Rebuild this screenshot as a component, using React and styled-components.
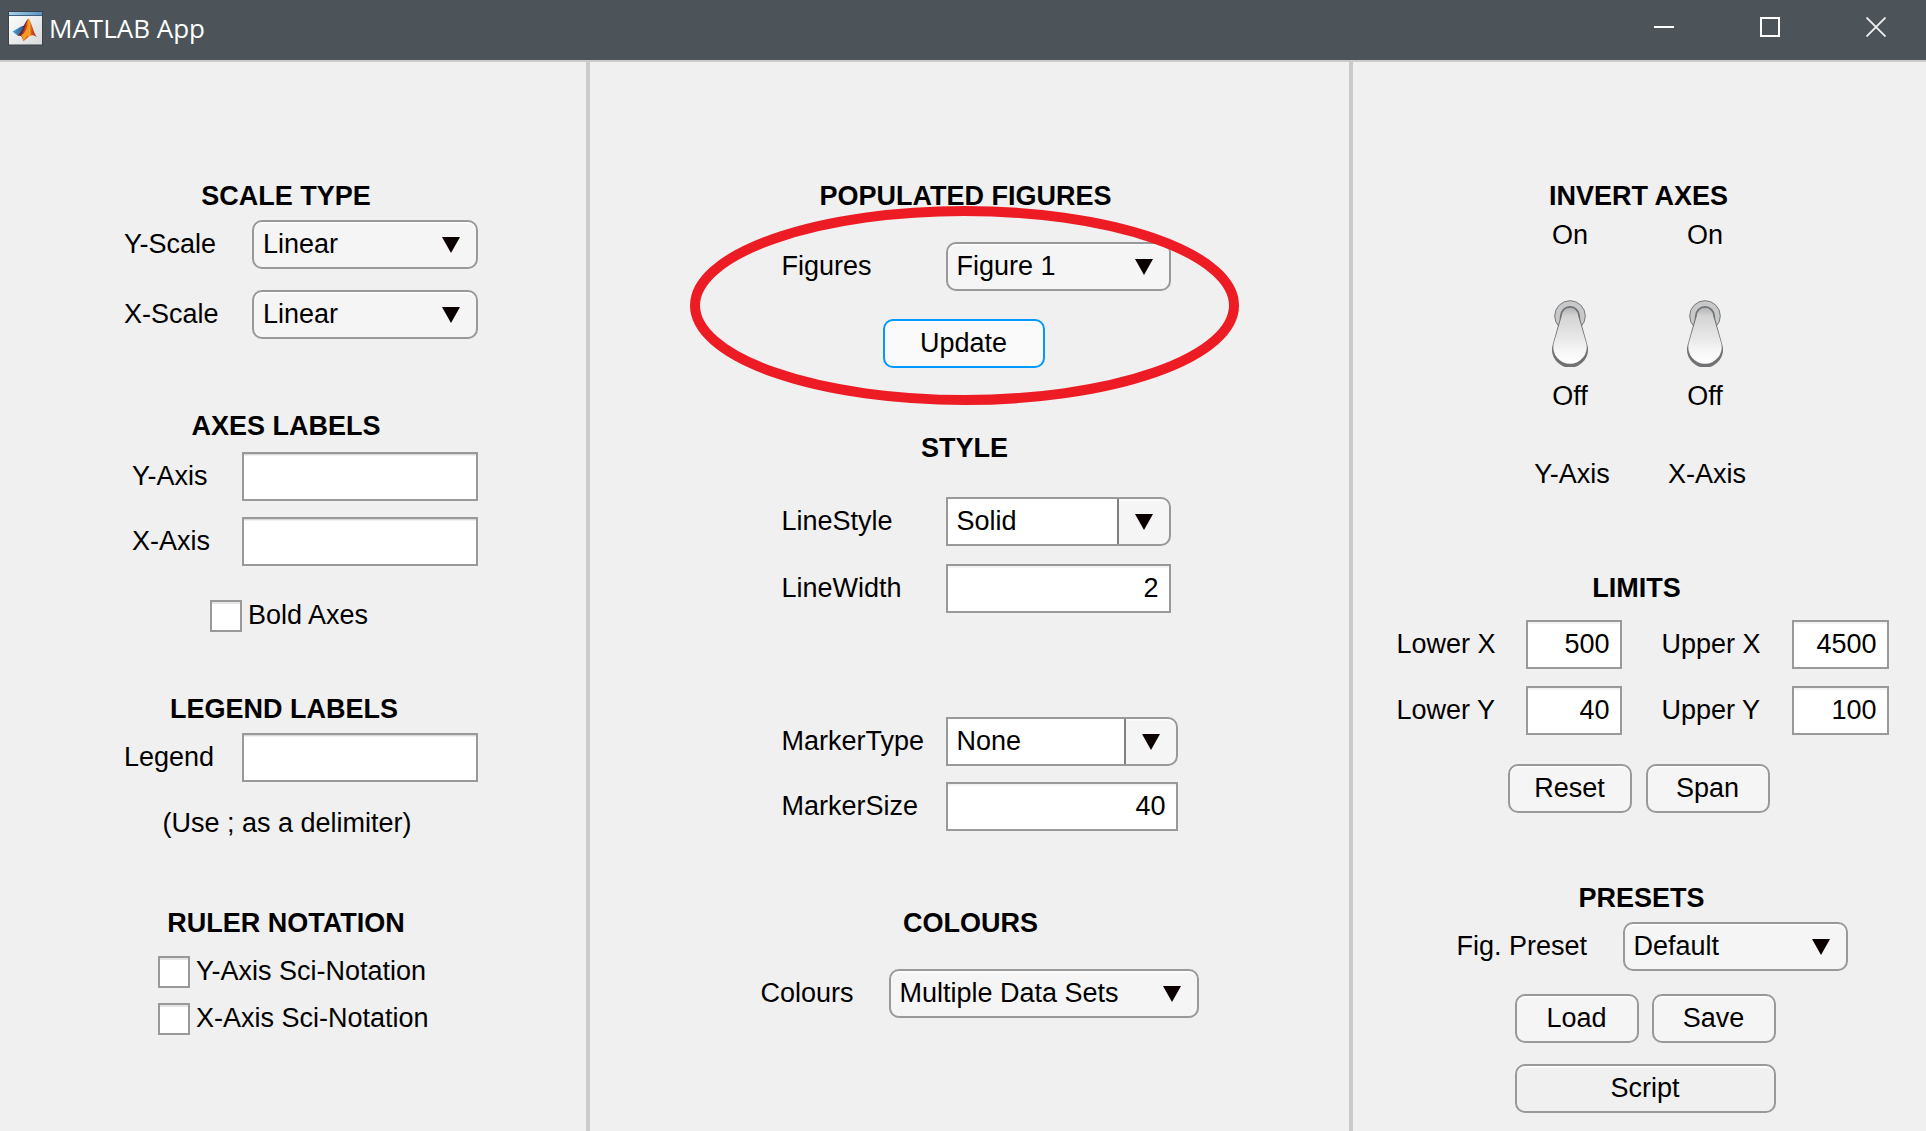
import React, { useState } from "react";
import styled, { createGlobalStyle } from "styled-components";

const GlobalStyle = createGlobalStyle`
  *, *::before, *::after { box-sizing: border-box; }
  body {
    margin: 0;
    background: #f0f0f0;
    color: #000;
    font: 27px/32px "Liberation Sans", Arial, Helvetica, sans-serif;
  }
  button, input, select { font: inherit; color: inherit; margin: 0; }
`;

const Window = styled.div`
  display: flex;
  flex-direction: column;
  min-height: 100vh;
`;

const TitleBar = styled.header`
  display: flex;
  align-items: center;
  height: 62px;
  padding: 0 0 4px 8px;
  background: #4c5459;
  border-bottom: 2px solid #cbcbcb;
`;

const AppTitle = styled.h1`
  flex: 1;
  margin: 0;
  padding-left: 6px;
  color: #fff;
  font: 400 26px/36px "Open Sans", "Noto Sans", sans-serif;
`;

const WindowControls = styled.div`
  display: flex;
  gap: 6px;
  align-self: flex-start;
`;

const WindowButton = styled.button`
  display: flex;
  align-items: center;
  justify-content: center;
  width: 100px;
  height: 54px;
  padding: 0;
  border: 0;
  background: transparent;
`;

const Panels = styled.main`
  flex: 1;
  display: grid;
  grid-template-columns: 590fr 763fr 573fr;
`;

const Panel = styled.section`
  display: flex;
  flex-direction: column;
  align-items: center;
  padding: 119px 0 16px ${(p) => p.$lead}px;
  border-right: ${(p) => (p.$last ? "0" : "4px solid #cbcbcb")};
`;

const Group = styled.div`
  position: relative;
  display: flex;
  flex-direction: column;
  width: ${(p) => p.$width}px;
  margin-top: ${(p) => p.$space || 0}px;
`;

const Heading = styled.h2`
  margin: 0;
  padding: 0 ${(p) => p.$inset}px 2px 0;
  font-size: 27px;
  line-height: 30px;
  font-weight: 700;
  text-align: center;
  white-space: nowrap;
`;

const Row = styled.div`
  display: flex;
  align-items: flex-start;
  align-self: ${(p) => (p.$wide ? "center" : "auto")};
  margin-top: ${(p) => p.$space}px;
  padding-left: ${(p) => p.$indent || 0}px;
`;

const Centered = styled.div`
  display: flex;
  justify-content: center;
  gap: 14px;
  margin-top: ${(p) => p.$space}px;
  padding-right: ${(p) => p.$inset || 0}px;
`;

const FieldLabel = styled.label`
  flex: none;
  width: ${(p) => p.$width}px;
  line-height: 48px;
  white-space: nowrap;
`;

const TextBox = styled.input`
  width: ${(p) => p.$width}px;
  height: 49px;
  padding: 0 10px 1px;
  border: 2px solid #999;
  border-radius: 0;
  background: #fff;
  box-shadow: inset 0 1px #d9d9d9, inset 0 2px #f0f0f0;
  outline: 0;
`;

const NumberBox = styled(TextBox)`
  text-align: right;
  box-shadow: inset 0 2px #f3f3f3;
`;

const SelectFrame = styled.div`
  display: grid;
  grid-template-columns: 1fr 50px;
  align-items: center;
  width: ${(p) => p.$width}px;
  height: 49px;
  border: 2px solid #999;
  border-radius: ${(p) => (p.$combo ? "0 10px 10px 0" : "10px")};
  background: #f5f5f5;
  box-shadow: inset 0 1px #fff, inset 0 2px #fafafa;
  overflow: hidden;
`;

const NativeSelect = styled.select`
  grid-row: 1;
  grid-column: ${(p) => (p.$combo ? "1" : "1 / 3")};
  width: 100%;
  height: 45px;
  padding: 0 0 1px 9px;
  appearance: none;
  border: 0;
  border-right: ${(p) => (p.$combo ? "2px solid #808080" : "0")};
  border-radius: 0;
  background: ${(p) => (p.$combo ? "#fff" : "transparent")};
  outline: 0;
`;

const Arrow = styled.svg`
  grid-row: 1;
  grid-column: 2;
  justify-self: center;
  display: block;
  pointer-events: none;
`;

const PushButton = styled.button`
  width: ${(p) => p.$width}px;
  height: 49px;
  padding: 0 0 1px;
  border: 2px solid ${(p) => (p.$focused ? "#0099ff" : "#999")};
  border-radius: 10px;
  background: ${(p) => (p.$focused ? "#fafafa" : p.$flat ? "#f0f0f0" : "#f5f5f5")};
  box-shadow: inset 0 1px #fff, inset 0 2px #fafafa;
`;

const PresetActions = styled.div`
  display: grid;
  grid-template-columns: 124px 124px;
  column-gap: 13px;
  row-gap: 21px;
  margin-top: 23px;
  padding-left: 118px;
`;

const ScriptButton = styled(PushButton)`
  grid-column: 1 / 3;
  width: 100%;
`;

const CheckLabel = styled.label`
  display: flex;
  align-items: flex-start;
  gap: 6px;
  margin-top: ${(p) => p.$space}px;
  padding-left: ${(p) => p.$indent}px;
  line-height: 30px;
`;

const CheckBox = styled.input`
  appearance: none;
  width: 32px;
  height: 32px;
  border: 2px solid #999;
  background: #fff;
  box-shadow: inset 0 2px #e6e6e6;
  &:checked { background: #666; }
`;

const Note = styled.p`
  margin: 0;
  margin-top: 25px;
  padding-right: 28px;
  text-align: center;
`;

const Switches = styled.div`
  display: flex;
  justify-content: center;
  gap: 35px;
  margin-top: 6px;
  padding-right: 10px;
`;

const SwitchColumn = styled.label`
  display: flex;
  flex-direction: column;
  align-items: center;
  width: 100px;
`;

const SwitchBody = styled.span`
  position: relative;
  display: block;
  width: 36px;
  height: 67px;
  margin: 49px 0 13px;
`;

const SwitchInput = styled.input`
  position: absolute;
  inset: 0;
  width: 100%;
  height: 100%;
  opacity: 0;
`;

const Lever = styled.svg`
  display: block;
  transform: ${(p) => (p.$on ? "scaleY(-1)" : "none")};
`;

const AxisName = styled.span`
  margin-top: 46px;
  padding-left: 4px;
`;

const LimitGrid = styled.div`
  display: grid;
  grid-template-columns: 129px 96px 1fr 130px 97px;
  row-gap: 17px;
  margin-top: 15px;
`;

const UpperLabel = styled(FieldLabel)`
  grid-column: 4;
`;

const Highlight = styled.svg`
  position: absolute;
  left: -92px;
  top: 25px;
  pointer-events: none;
`;

function MatlabIcon() {
  return (
    <svg width="35" height="35" viewBox="0 0 35 35" aria-hidden="true">
      <defs>
        <linearGradient id="iconPage" x1="0" y1="0" x2="1" y2="1">
          <stop offset="0" stopColor="#fff" />
          <stop offset="1" stopColor="#d6d9da" />
        </linearGradient>
        <linearGradient id="iconBar" x1="0" y1="0" x2="1" y2="0">
          <stop offset="0" stopColor="#a9d0ea" />
          <stop offset="1" stopColor="#5d94c2" />
        </linearGradient>
        <linearGradient id="iconBlue" x1="0" y1="0" x2="1" y2="0">
          <stop offset="0" stopColor="#4da3d8" />
          <stop offset="1" stopColor="#2b5288" />
        </linearGradient>
        <linearGradient id="iconPeak" x1="0" y1="0" x2="1" y2="0">
          <stop offset="0" stopColor="#7a1a16" />
          <stop offset="0.38" stopColor="#d94a18" />
          <stop offset="0.55" stopColor="#f6b02c" />
          <stop offset="0.7" stopColor="#d9521c" />
          <stop offset="1" stopColor="#9c1c12" />
        </linearGradient>
      </defs>
      <rect x="0.5" y="0.5" width="34" height="33.5" fill="url(#iconPage)" stroke="#39434a" />
      <rect x="1" y="1" width="33" height="3" fill="url(#iconBar)" />
      <rect x="1" y="4" width="33" height="1" fill="#3c5f7c" />
      <path d="M4.500 20.500L11.500 16.500Q13.500 14.500 15.500 15L17 17L12.500 24L9.500 24.500Z" fill="url(#iconBlue)" />
      <path d="M14.500 15.800C17 14 18 9 20.700 7.500L18.500 19L13 25L9.500 24.500C12.500 22 14.500 18.500 15.500 17Z" fill="#6d2330" />
      <path d="M12 24.500C17 20 18 10 20.700 7.500C23 9 25 21 28.700 26C26 24 24 23.500 22 25L15.500 30C14.500 28 14 25 12 24.500Z" fill="url(#iconPeak)" />
      <path d="M15.500 30C14.800 27.500 14.200 25.500 13 24.500C17 22 19.500 17 20.500 11C22 18 22 23 15.500 30Z" fill="#f09a24" />
    </svg>
  );
}

function SwitchLever({ on }) {
  return (
    <Lever $on={on} width="36" height="67" viewBox="0 0 36 67" aria-hidden="true">
      <defs>
        <linearGradient id="lever" x1="0" y1="0" x2="0" y2="1">
          <stop offset="0" stopColor="#b4b4b4" />
          <stop offset="0.15" stopColor="#d4d4d4" />
          <stop offset="0.5" stopColor="#e6e6e6" />
          <stop offset="0.8" stopColor="#f7f7f7" />
          <stop offset="1" stopColor="#fff" />
        </linearGradient>
      </defs>
      <circle cx="18" cy="16" r="15.300" fill="#c8c9cb" stroke="#77797b" />
      <path d="M8 16A10 10 0 0 1 28 16L28.500 20L35.400 45A18 18 0 1 1 0.600 45L7.500 20Z" fill="#6f7173" />
      <path d="M9.800 16A8.200 8.200 0 0 1 26.200 16L27.400 20L34.300 43.500A16.700 16.700 0 1 1 1.700 43.500L8.600 20Z" fill="url(#lever)" />
    </Lever>
  );
}

function DropDown({ id, width, options, combo }) {
  return (
    <SelectFrame $width={width} $combo={combo}>
      <NativeSelect id={id} $combo={combo}>
        {options.map((o) => (
          <option key={o}>{o}</option>
        ))}
      </NativeSelect>
      <Arrow width="18" height="16" viewBox="0 0 18 16" aria-hidden="true">
        <path d="M0 0H18L9 16Z" fill="#0a0000" />
      </Arrow>
    </SelectFrame>
  );
}

function Check({ id, children, space, indent }) {
  return (
    <CheckLabel htmlFor={id} $space={space} $indent={indent}>
      <CheckBox id={id} type="checkbox" />
      {children}
    </CheckLabel>
  );
}

function ToggleSwitch({ id, name }) {
  const [on, setOn] = useState(false);
  return (
    <SwitchColumn htmlFor={id}>
      <span>On</span>
      <SwitchBody>
        <SwitchLever on={on} />
        <SwitchInput
          id={id}
          type="checkbox"
          role="switch"
          checked={on}
          onChange={(e) => setOn(e.target.checked)}
        />
      </SwitchBody>
      <span>Off</span>
      <AxisName>{name}</AxisName>
    </SwitchColumn>
  );
}

function AxesPanel() {
  return (
    <Panel $lead={16}>
      <Group $width={354}>
        <Heading $inset={30}>SCALE TYPE</Heading>
        <Row $space={7}>
          <FieldLabel htmlFor="y-scale" $width={128}>Y-Scale</FieldLabel>
          <DropDown id="y-scale" width={226} options={["Linear", "Log"]} />
        </Row>
        <Row $space={21}>
          <FieldLabel htmlFor="x-scale" $width={128}>X-Scale</FieldLabel>
          <DropDown id="x-scale" width={226} options={["Linear", "Log"]} />
        </Row>
      </Group>
      <Group $width={354} $space={72}>
        <Heading $inset={30}>AXES LABELS</Heading>
        <Row $space={9} $indent={8}>
          <FieldLabel htmlFor="y-label" $width={110}>Y-Axis</FieldLabel>
          <TextBox id="y-label" type="text" $width={236} />
        </Row>
        <Row $space={16} $indent={8}>
          <FieldLabel htmlFor="x-label" $width={110}>X-Axis</FieldLabel>
          <TextBox id="x-label" type="text" $width={236} />
        </Row>
        <Check id="bold-axes" space={34} indent={86}>Bold Axes</Check>
      </Group>
      <Group $width={354} $space={62}>
        <Heading $inset={34}>LEGEND LABELS</Heading>
        <Row $space={7}>
          <FieldLabel htmlFor="legend" $width={118}>Legend</FieldLabel>
          <TextBox id="legend" type="text" $width={236} />
        </Row>
        <Note>(Use ; as a delimiter)</Note>
      </Group>
      <Group $width={354} $space={69}>
        <Heading $inset={30}>RULER NOTATION</Heading>
        <Check id="y-sci" space={16} indent={34}>Y-Axis Sci-Notation</Check>
        <Check id="x-sci" space={15} indent={34}>X-Axis Sci-Notation</Check>
      </Group>
    </Panel>
  );
}

function FiguresPanel() {
  return (
    <Panel $lead={20}>
      <Group $width={396}>
        <Heading $inset={28}>POPULATED FIGURES</Heading>
        <Row $space={29}>
          <FieldLabel htmlFor="figures" $width={164}>Figures</FieldLabel>
          <DropDown id="figures" width={225} options={["Figure 1"]} />
        </Row>
        <Centered $space={28} $inset={32}>
          <PushButton type="button" $width={162} $focused>Update</PushButton>
        </Centered>
        <Highlight width="549" height="199" viewBox="0 0 549 199" aria-hidden="true">
          <ellipse cx="274.500" cy="99.500" rx="269.500" ry="94.500" fill="none" stroke="#ed1c24" strokeWidth="10" />
        </Highlight>
      </Group>
      <Group $width={396} $space={65}>
        <Heading $inset={30}>STYLE</Heading>
        <Row $space={32}>
          <FieldLabel htmlFor="line-style" $width={164}>LineStyle</FieldLabel>
          <DropDown id="line-style" width={225} options={["Solid", "Dashed", "Dotted"]} combo />
        </Row>
        <Row $space={18}>
          <FieldLabel htmlFor="line-width" $width={164}>LineWidth</FieldLabel>
          <NumberBox id="line-width" type="text" inputMode="decimal" defaultValue="2" $width={225} />
        </Row>
        <Row $space={104}>
          <FieldLabel htmlFor="marker-type" $width={164}>MarkerType</FieldLabel>
          <DropDown id="marker-type" width={232} options={["None", "Circle", "Square"]} combo />
        </Row>
        <Row $space={16}>
          <FieldLabel htmlFor="marker-size" $width={164}>MarkerSize</FieldLabel>
          <NumberBox id="marker-size" type="text" inputMode="decimal" defaultValue="40" $width={232} />
        </Row>
      </Group>
      <Group $width={396} $space={77}>
        <Heading $inset={18}>COLOURS</Heading>
        <Row $space={29} $wide>
          <FieldLabel htmlFor="colours" $width={128}>Colours</FieldLabel>
          <DropDown id="colours" width={310} options={["Multiple Data Sets"]} />
        </Row>
      </Group>
    </Panel>
  );
}

function LimitsPanel() {
  return (
    <Panel $lead={6} $last>
      <Group $width={492}>
        <Heading $inset={8}>INVERT AXES</Heading>
        <Switches>
          <ToggleSwitch id="invert-y" name="Y-Axis" />
          <ToggleSwitch id="invert-x" name="X-Axis" />
        </Switches>
      </Group>
      <Group $width={492} $space={83}>
        <Heading $inset={12}>LIMITS</Heading>
        <LimitGrid>
          <FieldLabel htmlFor="lower-x">Lower X</FieldLabel>
          <NumberBox id="lower-x" type="text" inputMode="decimal" defaultValue="500" $width={96} />
          <UpperLabel htmlFor="upper-x">Upper X</UpperLabel>
          <NumberBox id="upper-x" type="text" inputMode="decimal" defaultValue="4500" $width={97} />
          <FieldLabel htmlFor="lower-y">Lower Y</FieldLabel>
          <NumberBox id="lower-y" type="text" inputMode="decimal" defaultValue="40" $width={96} />
          <UpperLabel htmlFor="upper-y">Upper Y</UpperLabel>
          <NumberBox id="upper-y" type="text" inputMode="decimal" defaultValue="100" $width={97} />
        </LimitGrid>
        <Centered $space={29} $inset={8}>
          <PushButton type="button" $width={124}>Reset</PushButton>
          <PushButton type="button" $width={124}>Span</PushButton>
        </Centered>
      </Group>
      <Group $width={492} $space={70}>
        <Heading $inset={2}>PRESETS</Heading>
        <Row $space={7} $indent={60}>
          <FieldLabel htmlFor="preset" $width={166}>Fig. Preset</FieldLabel>
          <DropDown id="preset" width={225} options={["Default"]} />
        </Row>
        <PresetActions>
          <PushButton type="button" $width={124}>Load</PushButton>
          <PushButton type="button" $width={124}>Save</PushButton>
          <ScriptButton type="button" $flat>Script</ScriptButton>
        </PresetActions>
      </Group>
    </Panel>
  );
}

export default function App() {
  return (
    <Window>
      <GlobalStyle />
      <TitleBar>
        <MatlabIcon />
        <AppTitle>MATLAB App</AppTitle>
        <WindowControls>
          <WindowButton type="button" aria-label="Minimize">
            <svg width="20" height="20"><path d="M0 10H20" stroke="#fff" strokeWidth="2" /></svg>
          </WindowButton>
          <WindowButton type="button" aria-label="Maximize">
            <svg width="20" height="20"><rect x="1" y="1" width="18" height="18" fill="none" stroke="#fff" strokeWidth="2" /></svg>
          </WindowButton>
          <WindowButton type="button" aria-label="Close">
            <svg width="20" height="20"><path d="M0.500 0.500L19.500 19.500M19.500 0.500L0.500 19.500" stroke="#f2f2f2" strokeWidth="1.800" /></svg>
          </WindowButton>
        </WindowControls>
      </TitleBar>
      <Panels>
        <AxesPanel />
        <FiguresPanel />
        <LimitsPanel />
      </Panels>
    </Window>
  );
}
